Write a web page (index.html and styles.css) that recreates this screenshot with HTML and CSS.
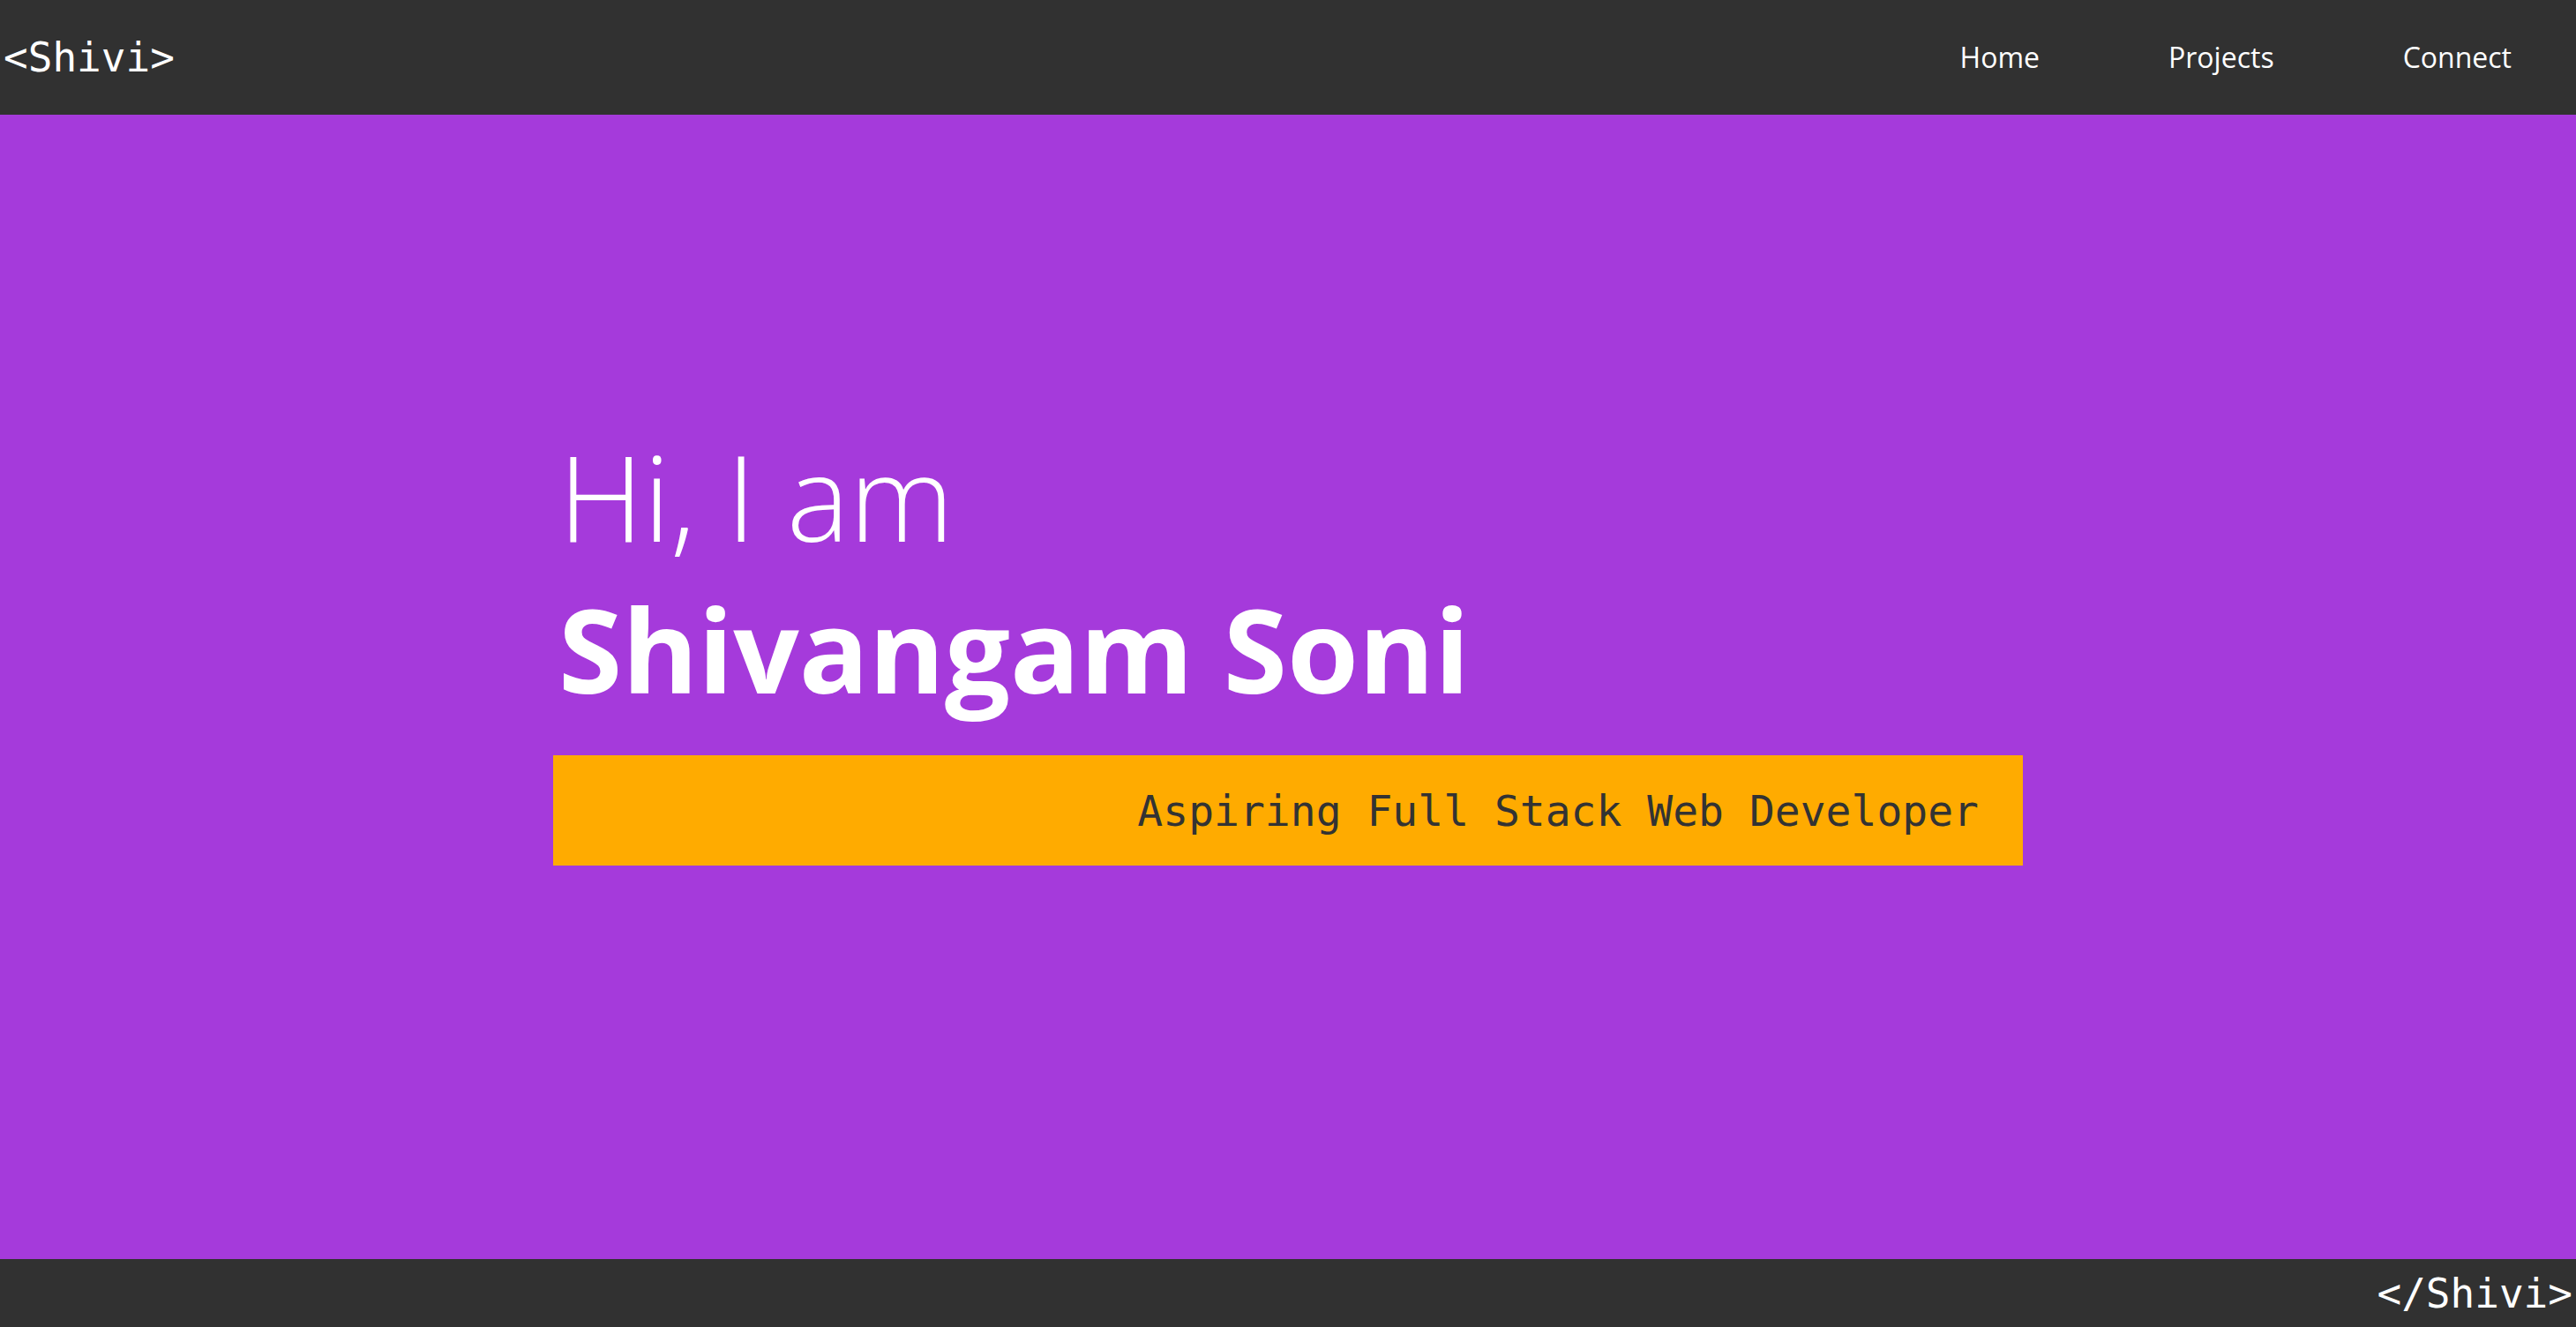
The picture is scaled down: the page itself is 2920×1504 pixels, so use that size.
FILE: index.html
```html
<!DOCTYPE html>
<html lang="en">
<head>
<meta charset="utf-8">
<title>Shivi</title>
<link rel="stylesheet" href="styles.css">
</head>
<body>
<div class="page">
  <header class="topbar">
    <div class="logo">&lt;Shivi&gt;</div>
    <nav class="nav">
      <a class="nav-link" href="#">Home</a>
      <a class="nav-link" href="#">Projects</a>
      <a class="nav-link" href="#">Connect</a>
    </nav>
  </header>
  <main class="hero">
    <div class="hero-inner">
      <h1 class="greet">Hi, I am</h1>
      <h2 class="name">Shivangam Soni</h2>
      <div class="tagline">Aspiring Full Stack Web Developer</div>
    </div>
  </main>
  <footer class="footbar">
    <div class="foot-logo">&lt;/Shivi&gt;</div>
  </footer>
</div>
</body>
</html>
```

FILE: styles.css
```css
* { box-sizing: border-box; }
html, body { margin: 0; padding: 0; height: 100%; }
body {
  font-family: "Open Sans", "Noto Sans", sans-serif;
  background: #a53adb;
  color: #fff;
}
.page {
  display: flex;
  flex-direction: column;
  height: 100vh;
}
.topbar {
  height: 130px;
  flex: none;
  background: #313131;
  display: flex;
  align-items: center;
  justify-content: space-between;
  padding-left: 4px;
}
.logo, .foot-logo {
  font-family: "DejaVu Sans Mono", "Liberation Mono", monospace;
  font-size: 46px;
  color: #fff;
  line-height: 1;
}
.nav { display: flex; align-items: center; }
.nav-link {
  color: #fff;
  text-decoration: none;
  font-size: 32px;
  padding: 0 73px;
  line-height: 1;
}
.hero {
  flex: 1;
  display: flex;
  justify-content: center;
  padding-top: 346px;
}
.hero-inner {
  width: 1666px;
}
.greet, .name {
  margin: 0;
  line-height: 173px;
  padding-left: 6px;
}
.greet { font-weight: 300; font-size: 134px; }
.name { font-weight: 700; font-size: 131px; }
.tagline {
  margin-top: 34px;
  height: 125px;
  background: #ffab00;
  color: #333;
  display: flex;
  align-items: center;
  justify-content: flex-end;
  padding-right: 50px;
  font-family: "DejaVu Sans Mono", "Liberation Mono", monospace;
  font-size: 48px;
}
.footbar {
  height: 77px;
  flex: none;
  background: #313131;
  display: flex;
  align-items: center;
  justify-content: flex-end;
  padding-right: 4px;
}
```
